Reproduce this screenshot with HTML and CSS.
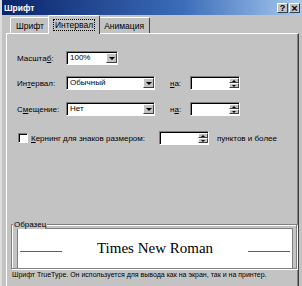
FILE: index.html
```html
<!DOCTYPE html>
<html lang="ru">
<head>
  <meta charset="UTF-8">
  <title>Шрифт</title>
  <link rel="stylesheet" href="styles.css">
</head>
<body>

<div class="dialog">
  <div class="titlebar">
    <span class="title">Шрифт</span>
    <span class="tb-btn">?</span>
    <span class="tb-btn close">×</span>
  </div>

  <div class="tabs">
    <div class="tab first">Шрифт</div>
    <div class="tab active"><span class="focus">Интервал</span></div>
    <div class="tab">Анимация</div>
  </div>

  <div class="panel">
    <div class="row row-scale">
      <span class="lbl">Масшта<u>б</u>:</span>
      <div class="select w-scale"><span class="val">100%</span><span class="drop"></span></div>
    </div>

    <div class="row row-spacing">
      <span class="lbl">Ин<u>т</u>ервал:</span>
      <div class="select w-wide"><span class="val">Обычный</span><span class="drop"></span></div>
      <span class="lbl-on"><u>н</u>а:</span>
      <div class="spin"><span class="val"></span><span class="arrows"><span class="up"></span><span class="down"></span></span></div>
    </div>

    <div class="row row-offset">
      <span class="lbl">С<u>м</u>ещение:</span>
      <div class="select w-wide"><span class="val">Нет</span><span class="drop"></span></div>
      <span class="lbl-on">н<u>а</u>:</span>
      <div class="spin"><span class="val"></span><span class="arrows"><span class="up"></span><span class="down"></span></span></div>
    </div>

    <div class="row row-kern">
      <span class="check"></span>
      <span class="kern-lbl"><u>К</u>ернинг для знаков размером:</span>
      <div class="spin"><span class="val"></span><span class="arrows"><span class="up"></span><span class="down"></span></span></div>
      <span class="after">пунктов и более</span>
    </div>

    <div class="sample">
      <span class="legend">Образец</span>
      <div class="preview">
        <span class="rule"></span>
        <span class="font-name">Times New Roman</span>
        <span class="rule"></span>
      </div>
    </div>

    <div class="note">Шрифт TrueType. Он используется для вывода как на экран, так и на принтер.</div>
  </div>
</div>

</body>
</html>
```

FILE: styles.css
```css
body {
  margin: 0;
  background: #c0c0c0;
}

.dialog {
  width: 302px;
  height: 286px;
  overflow: hidden;
  background: #c3c3c3;
  font-family: "Liberation Sans", Arial, sans-serif;
  font-size: 8px;
  color: #000;
  box-sizing: border-box;
  border-left: 2px solid #dcdcdc;
}

/* title bar */
.titlebar {
  height: 15px;
  display: flex;
  align-items: center;
  background: linear-gradient(90deg, #0a246a, #3c6cb8 60%, #a6caf0);
  padding: 0 2px 0 2px;
}

.title {
  flex: 1;
  color: #fff;
  font-weight: bold;
  font-size: 8.5px;
}

.tb-btn {
  width: 11px;
  height: 10px;
  margin-left: 1px;
  background: #c3c3c3;
  border-top: 1px solid #fff;
  border-left: 1px solid #fff;
  border-right: 1px solid #404040;
  border-bottom: 1px solid #404040;
  box-sizing: border-box;
  font-size: 9px;
  font-weight: bold;
  line-height: 8px;
  text-align: center;
}

.tb-btn.close {
  font-size: 11px;
}

/* tabs */
.tabs {
  display: flex;
  align-items: flex-end;
  height: 18px;
  padding-left: 6px;
}

.tab {
  height: 16px;
  padding: 0 5px;
  display: flex;
  align-items: center;
  border-top: 1px solid #fff;
  border-left: 1px solid #fff;
  border-right: 1px solid #404040;
  border-radius: 2px 2px 0 0;
  box-sizing: border-box;
  font-size: 8.5px;
}

.tab.first {
  margin-left: 2px;
}

.tab.active {
  height: 19px;
  margin: 0 -2px;
  padding: 0 4px;
  background: #c3c3c3;
  position: relative;
  z-index: 1;
  margin-bottom: -1px;
}

.tab.active .focus {
  border: 1px dotted #000;
  padding: 0 1px;
  line-height: 10px;
}

/* panel */
.panel {
  margin-left: 4px;
  width: 293px;
  height: 260px;
  box-sizing: border-box;
  border-top: 1px solid #fff;
  border-left: 1px solid #fff;
  border-right: 1px solid #404040;
  box-shadow: inset -1px 0 0 #808080;
  padding-top: 17px;
}

.row {
  display: flex;
  align-items: center;
  height: 14px;
  padding-left: 10px;
}

.row-spacing { margin-top: 11px; }
.row-offset { margin-top: 12px; }
.row-kern { margin-top: 15px; }

.lbl {
  width: 49px;
}

.select, .spin {
  height: 14px;
  display: flex;
  background: #fff;
  box-sizing: border-box;
  border-top: 1px solid #808080;
  border-left: 1px solid #808080;
  border-right: 1px solid #fff;
  border-bottom: 1px solid #fff;
  box-shadow: inset 1px 1px 0 #000;
}

.val {
  flex: 1;
  padding-left: 3px;
  line-height: 12px;
}

.w-scale { width: 52px; }
.w-wide { width: 89px; }

.drop {
  width: 11px;
  margin: 1px 0 1px 0;
  background: #c3c3c3;
  border-top: 1px solid #fff;
  border-left: 1px solid #fff;
  border-right: 1px solid #404040;
  border-bottom: 1px solid #404040;
  box-sizing: border-box;
  position: relative;
}

.drop::after {
  content: "";
  position: absolute;
  left: 2px;
  top: 3px;
  border-left: 3px solid transparent;
  border-right: 3px solid transparent;
  border-top: 3px solid #000;
}

.lbl-on {
  margin-left: 15px;
  width: 20px;
}

.spin {
  width: 50px;
}

.arrows {
  width: 10px;
  margin: 1px 0;
  display: flex;
  flex-direction: column;
}

.arrows span {
  flex: 1;
  background: #c3c3c3;
  border-top: 1px solid #fff;
  border-left: 1px solid #fff;
  border-right: 1px solid #404040;
  border-bottom: 1px solid #404040;
  box-sizing: border-box;
  position: relative;
}

.arrows .up::after,
.arrows .down::after {
  content: "";
  position: absolute;
  left: 2px;
  border-left: 2px solid transparent;
  border-right: 2px solid transparent;
}

.arrows .up::after {
  top: 1px;
  border-bottom: 2px solid #000;
}

.arrows .down::after {
  top: 1px;
  border-top: 2px solid #000;
}

.check {
  width: 10px;
  height: 10px;
  margin-left: 1px;
  background: #fff;
  box-sizing: border-box;
  border-top: 1px solid #808080;
  border-left: 1px solid #808080;
  border-right: 1px solid #fff;
  border-bottom: 1px solid #fff;
  box-shadow: inset 1px 1px 0 #000;
}

.kern-lbl {
  margin-left: 3px;
  width: 128px;
}

.after {
  margin-left: 8px;
}

/* sample group */
.sample {
  position: relative;
  margin: 79px 1px 0 4px;
  height: 45px;
  box-sizing: border-box;
  border: 1px solid #808080;
  box-shadow: inset 1px 1px 0 #fff, 1px 1px 0 #fff;
  padding: 3px 3px 0 5px;
}

.legend {
  position: absolute;
  left: 1px;
  top: -5px;
  background: #c3c3c3;
  padding: 0 1px;
}

.preview {
  height: 41px;
  background: #fff;
  box-sizing: border-box;
  border: 1px solid #808080;
  display: flex;
  align-items: center;
  padding: 0 2px;
}

.rule {
  width: 42px;
  height: 1px;
  background: #606060;
  margin-top: 6px;
}

.font-name {
  flex: 1;
  text-align: center;
  font-family: "Liberation Serif", "Times New Roman", serif;
  font-size: 15px;
}

.note {
  margin: 2px 0 0 5px;
  font-size: 7px;
  white-space: nowrap;
}
```
